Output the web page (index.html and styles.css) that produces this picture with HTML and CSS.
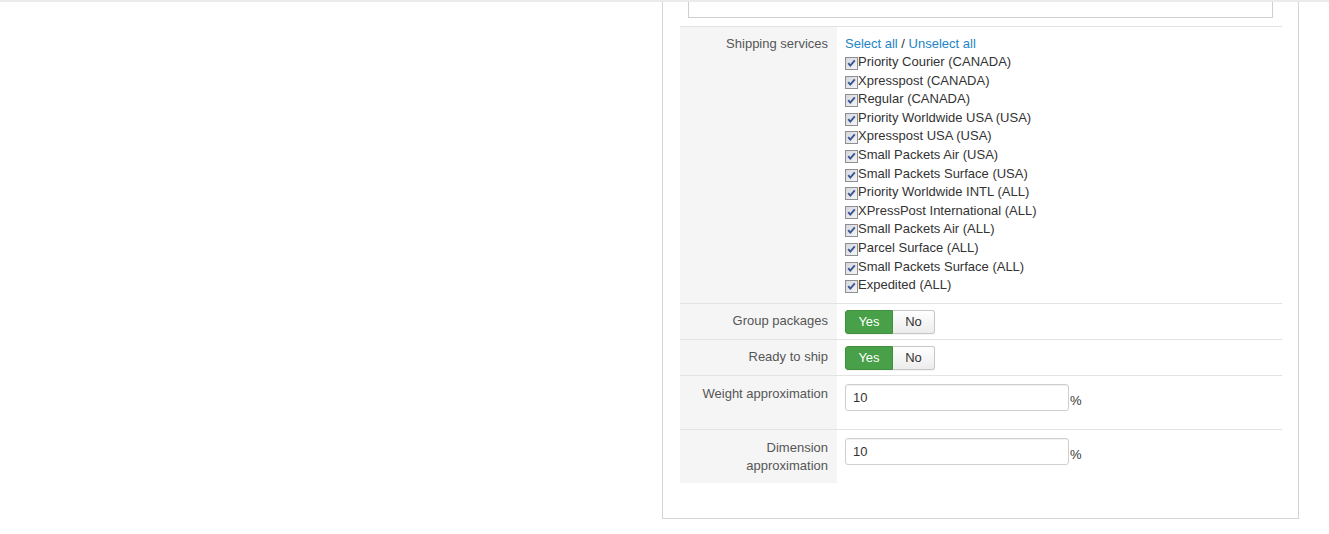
FILE: index.html
```html
<!DOCTYPE html>
<html lang="en">
<head>
<meta charset="utf-8">
<title>Carrier settings</title>
<link rel="stylesheet" href="styles.css">
</head>
<body>
<div class="topline"></div>
<div class="panel">
  <div class="notice"></div>
  <div class="form">
    <div class="row row-services">
      <div class="label">Shipping services</div>
      <div class="value">
        <div class="links"><a href="#">Select all</a> / <a href="#">Unselect all</a></div>
        <ul class="services">
          <li><span class="cb"></span>Priority Courier (CANADA)</li>
          <li><span class="cb"></span>Xpresspost (CANADA)</li>
          <li><span class="cb"></span>Regular (CANADA)</li>
          <li><span class="cb"></span>Priority Worldwide USA (USA)</li>
          <li><span class="cb"></span>Xpresspost USA (USA)</li>
          <li><span class="cb"></span>Small Packets Air (USA)</li>
          <li><span class="cb"></span>Small Packets Surface (USA)</li>
          <li><span class="cb"></span>Priority Worldwide INTL (ALL)</li>
          <li><span class="cb"></span>XPressPost International (ALL)</li>
          <li><span class="cb"></span>Small Packets Air (ALL)</li>
          <li><span class="cb"></span>Parcel Surface (ALL)</li>
          <li><span class="cb"></span>Small Packets Surface (ALL)</li>
          <li><span class="cb"></span>Expedited (ALL)</li>
        </ul>
      </div>
    </div>
    <div class="row">
      <div class="label">Group packages</div>
      <div class="value value-toggle">
        <div class="toggle"><span class="opt opt-on">Yes</span><span class="opt">No</span></div>
      </div>
    </div>
    <div class="row">
      <div class="label">Ready to ship</div>
      <div class="value value-toggle">
        <div class="toggle"><span class="opt opt-on">Yes</span><span class="opt">No</span></div>
      </div>
    </div>
    <div class="row">
      <div class="label label-field">Weight approximation</div>
      <div class="value value-field">
        <input class="field" type="text" value="10"><span class="unit">%</span>
      </div>
    </div>
    <div class="row row-last">
      <div class="label label-field">Dimension approximation</div>
      <div class="value value-field">
        <input class="field" type="text" value="10"><span class="unit">%</span>
      </div>
    </div>
  </div>
</div>
</body>
</html>
```

FILE: styles.css
```css
html, body {
  margin: 0;
  padding: 0;
  background: #fff;
}

body {
  font-family: "Liberation Sans", Arial, sans-serif;
  font-size: 13px;
  color: #333;
  line-height: 18px;
}

.topline {
  height: 2px;
  background: #ebebeb;
}

.panel {
  box-sizing: border-box;
  width: 637px;
  margin-left: 662px;
  border: 1px solid #d4d4d4;
  border-top: none;
  padding: 0 16px 35px 17px;
}

.notice {
  box-sizing: border-box;
  width: 585px;
  height: 16px;
  margin: 0 9px 8px 8px;
  border: 1px solid #cfcfcf;
  border-top: none;
}

.form {
  border-top: 1px solid #e3e3e3;
}

.row {
  display: flex;
  border-bottom: 1px solid #e3e3e3;
}

.row-last {
  border-bottom: none;
}

.label {
  box-sizing: border-box;
  flex: 0 0 157px;
  padding: 8px 9px 8px 8px;
  background: #f5f5f5;
  color: #555;
  text-align: right;
}

.label-field {
  padding-top: 9px;
}

.value {
  flex: 1;
  padding: 8px 8px 8px 8px;
}

.links a {
  color: #2384c6;
  text-decoration: none;
}

.links {
  color: #333;
}

.services {
  list-style: none;
  margin: 0;
  padding: 0;
}

.services li {
  height: 18.6px;
  line-height: 18.6px;
  white-space: nowrap;
}

.cb {
  display: inline-block;
  box-sizing: border-box;
  width: 13px;
  height: 13px;
  vertical-align: -4px;
  border: 1px solid #8d8f91;
  background-color: #e6e8ee;
  background-image:
    url("data:image/svg+xml,%3Csvg xmlns='http://www.w3.org/2000/svg' width='11' height='11' viewBox='0 0 11 11'%3E%3Cpath d='M2.2 5.2 L4.3 7.6 L8.8 2.3' fill='none' stroke='%233b5591' stroke-width='1.9'/%3E%3C/svg%3E"),
    linear-gradient(135deg, #d4d7de 0%, #f4f5f7 100%);
  background-repeat: no-repeat;
  background-position: center;
}

.value-toggle {
  padding: 6px 8px 5px 8px;
}

.toggle {
  display: inline-flex;
  height: 24px;
  border-radius: 3px;
  box-shadow: 0 1px 1px rgba(0, 0, 0, 0.05);
}

.opt {
  box-sizing: border-box;
  display: flex;
  align-items: center;
  justify-content: center;
  width: 42px;
  height: 24px;
  color: #333;
  background: linear-gradient(#ffffff, #ececec);
  border: 1px solid #c6c6c6;
  border-left: none;
  border-radius: 0 3px 3px 0;
}

.opt-on {
  width: 48px;
  color: #fff;
  background: #48a048;
  border: 1px solid #3f8f3f;
  border-radius: 3px 0 0 3px;
}

.value-field {
  display: flex;
  align-items: flex-start;
  padding: 8px 8px 18px 8px;
}

.field {
  box-sizing: border-box;
  width: 224px;
  height: 27px;
  margin: 0;
  padding: 4px 7px;
  font-family: "Liberation Sans", Arial, sans-serif;
  font-size: 13px;
  color: #333;
  border: 1px solid #cfcfcf;
  border-radius: 3px;
  box-shadow: inset 0 1px 1px rgba(0, 0, 0, 0.06);
  outline: none;
}

.unit {
  margin-left: 1px;
  padding-top: 8px;
  color: #333;
}
```
